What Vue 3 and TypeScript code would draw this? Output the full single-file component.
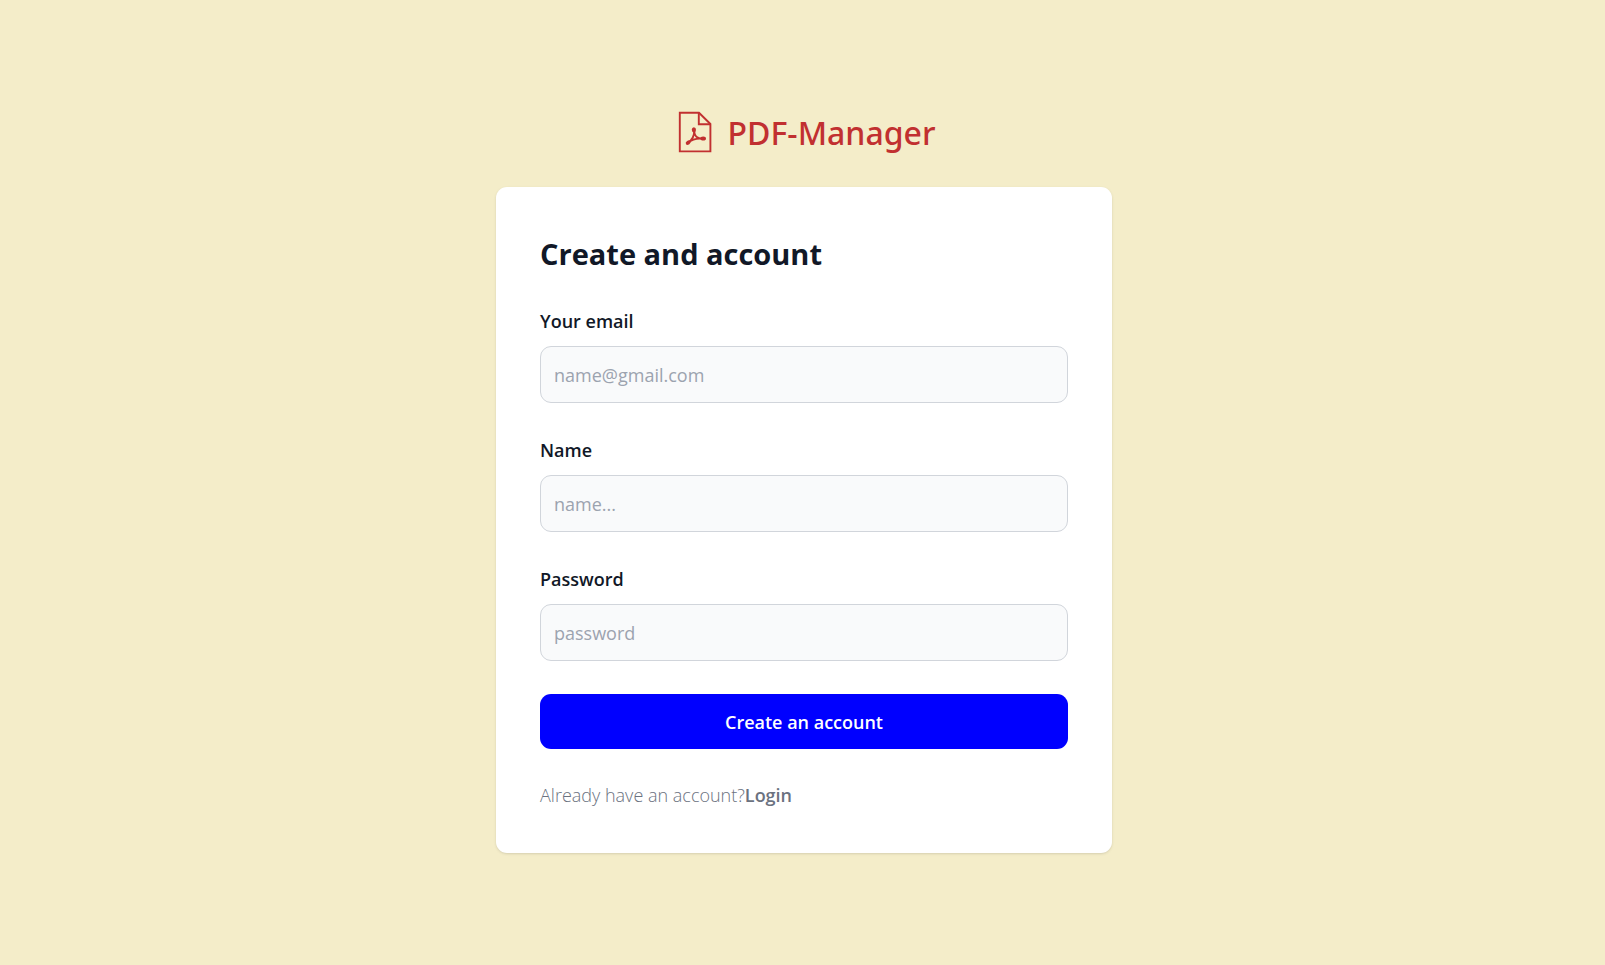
<script setup lang="ts">
import { reactive } from 'vue'

interface Field {
  id: 'email' | 'name' | 'password'
  label: string
  type: string
  placeholder: string
}

const fields: Field[] = [
  { id: 'email', label: 'Your email', type: 'email', placeholder: 'name@gmail.com' },
  { id: 'name', label: 'Name', type: 'text', placeholder: 'name...' },
  { id: 'password', label: 'Password', type: 'password', placeholder: 'password' },
]

const form = reactive({ email: '', name: '', password: '' })
</script>

<template>
  <main class="page">
    <a class="brand" href="#">
      <svg class="brand-icon" viewBox="0 0 44 44" fill="none" stroke="currentColor" aria-hidden="true">
        <path d="M6.8 1.8H26L37.4 13V40.4H6.8Z" stroke-width="1.9" />
        <path d="M25.8 1.8V13.2H37.4" stroke-width="1.9" />
        <path d="M20.9 19.2C21.6 25.2 23.4 27.6 30.2 27.7M21.2 19.2C21.5 25 19.6 28.6 14.9 31.8M15 31.6C19 28.4 24 27 30.2 27.8" stroke-width="1.9" />
        <g fill="currentColor" stroke="none">
          <ellipse cx="20.9" cy="18.8" rx="2.1" ry="2.6" />
          <ellipse cx="30.2" cy="27.6" rx="2.8" ry="2" />
          <ellipse cx="15.2" cy="31.6" rx="2.7" ry="1.9" transform="rotate(-35 15.2 31.6)" />
        </g>
      </svg>
      <span>PDF-Manager</span>
    </a>

    <section class="card">
      <h1>Create and account</h1>
      <form class="form" @submit.prevent>
        <div v-for="field in fields" :key="field.id" class="field">
          <label :for="field.id">{{ field.label }}</label>
          <input
            :id="field.id"
            v-model="form[field.id]"
            :type="field.type"
            :name="field.id"
            :placeholder="field.placeholder"
          />
        </div>
        <button type="submit">Create an account</button>
        <p class="hint">Already have an account?<a href="#">Login</a></p>
      </form>
    </section>
  </main>
</template>

<style>
body {
  margin: 0;
  background: #f4edc9;
}
</style>

<style scoped>
.page {
  box-sizing: border-box;
  min-height: 100vh;
  padding: 22px 21px 23px 24px;
  display: flex;
  flex-direction: column;
  align-items: center;
  justify-content: center;
  background: #f4edc9;
  font-family: 'Segoe UI', 'Open Sans', 'Noto Sans', sans-serif;
  font-size: 18px;
  line-height: 28px;
}

.brand {
  display: flex;
  align-items: center;
  gap: 11px;
  margin-bottom: 32px;
  color: #c13030;
  font-family: 'Segoe UI', 'Noto Sans', 'Open Sans', sans-serif;
  font-size: 32px;
  font-weight: 500;
  line-height: 44px;
  text-decoration: none;
}

.brand-icon {
  width: 44px;
  height: 44px;
}

.card {
  box-sizing: border-box;
  width: 100%;
  max-width: 616px;
  padding: 44px;
  border-radius: 11px;
  background: #fff;
  box-shadow: 0 1px 3px rgba(0, 0, 0, 0.1), 0 1px 2px -1px rgba(0, 0, 0, 0.1);
}

h1 {
  margin: 0 0 30px;
  color: #111827;
  font-size: 29px;
  font-weight: 700;
  line-height: 46px;
}

.form {
  display: flex;
  flex-direction: column;
  gap: 33px;
}

.field {
  display: flex;
  flex-direction: column;
  gap: 11px;
}

label {
  color: #111827;
  font-weight: 600;
}

input {
  box-sizing: border-box;
  width: 100%;
  height: 57px;
  padding: 0 13px;
  border: 1px solid #d1d5db;
  border-radius: 11px;
  background: #f9fafb;
  color: #111827;
  font: inherit;
}

input::placeholder {
  color: #9ca3af;
  opacity: 1;
}

button {
  height: 55px;
  padding: 0 28px;
  border: 0;
  border-radius: 11px;
  background: #00f;
  color: #fff;
  font: inherit;
  font-weight: 600;
  cursor: pointer;
}

.hint {
  margin: 0;
  color: #6b7280;
  font-weight: 300;
  line-height: 27px;
}

.hint a {
  color: inherit;
  font-weight: 600;
  text-decoration: none;
}
</style>
